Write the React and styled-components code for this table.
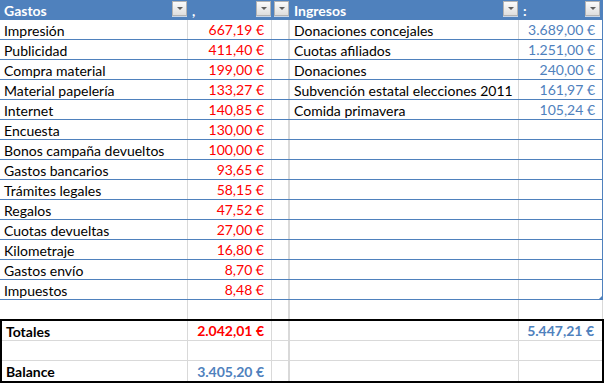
import React from "react";
import styled, { createGlobalStyle, css } from "styled-components";

const GlobalStyle = createGlobalStyle`
  html, body { margin: 0; padding: 0; background: #ffffff; }
  body { font-family: Lato, "Open Sans", sans-serif; font-size: 14px; color: #000; }
`;

const BLUE = "#4f81bd";
const GRID = "#d9d9d9";

const Sheet = styled.div`
  width: 604px;
  height: 383px;
  overflow: hidden;
  display: flex;
  flex-direction: column;
`;

const Row = styled.div`
  display: grid;
  grid-template-columns: ${(p) => (p.$boxed ? "186px 84px 18px 229px 83px" : "188px 84px 18px 229px 84px")};
  height: ${(p) => p.$h || 20}px;
  box-sizing: border-box;
  ${(p) =>
    p.$variant === "header" &&
    css`
      background: ${BLUE};
      color: #fff;
      font-weight: 700;
      width: 603px;
    `}
  ${(p) =>
    p.$variant === "data" &&
    css`
      border-bottom: 1px solid ${BLUE};
      width: 603px;
    `}
  ${(p) =>
    p.$variant === "grid" &&
    css`
      border-bottom: 1px solid ${GRID};
    `}
  ${(p) =>
    p.$variant === "last" &&
    css`
      border-bottom: none;
    `}
`;

const Cell = styled.div`
  position: relative;
  display: flex;
  align-items: center;
  justify-content: ${(p) => (p.$right ? "flex-end" : "flex-start")};
  padding: ${(p) => (p.$right ? "0 7px 0 0" : "1px 0 0 4px")};
  box-sizing: border-box;
  white-space: nowrap;
  overflow: visible;
  color: ${(p) => p.$color || "inherit"};
  font-weight: ${(p) => (p.$bold ? 700 : "inherit")};
  border-right: ${(p) => (p.$wide ? 2 : 1)}px solid ${(p) => p.$edge || GRID};
`;

const HeadCell = styled.div`
  position: relative;
  display: flex;
  align-items: center;
  padding-left: 4px;
  box-sizing: border-box;
  white-space: nowrap;
`;

const FilterButton = styled.span`
  position: absolute;
  right: ${(p) => p.$right ?? 1}px;
  top: 1px;
  width: 15px;
  height: 15px;
  box-sizing: border-box;
  border: 1px solid #b3b3b3;
  background: linear-gradient(#fbfbfb, #dedede);
  box-shadow: 0 1px 0 #c8d6e8;
  &::after {
    content: "";
    position: absolute;
    left: 4px;
    top: 5px;
    border-left: 3px solid transparent;
    border-right: 3px solid transparent;
    border-top: 3px solid #5f5f5f;
  }
`;

const ResizeHandle = styled.span`
  position: absolute;
  right: -1px;
  bottom: 0;
  width: 0;
  height: 0;
  border-left: 4px solid transparent;
  border-bottom: 4px solid ${BLUE};
`;

const TotalsBox = styled.div`
  border: 2px solid #000;
  width: 604px;
  box-sizing: border-box;
`;

const gastos = [
  ["Impresión", "667,19 €"],
  ["Publicidad", "411,40 €"],
  ["Compra material", "199,00 €"],
  ["Material papelería", "133,27 €"],
  ["Internet", "140,85 €"],
  ["Encuesta", "130,00 €"],
  ["Bonos campaña devueltos", "100,00 €"],
  ["Gastos bancarios", "93,65 €"],
  ["Trámites legales", "58,15 €"],
  ["Regalos", "47,52 €"],
  ["Cuotas devueltas", "27,00 €"],
  ["Kilometraje", "16,80 €"],
  ["Gastos envío", "8,70 €"],
  ["Impuestos", "8,48 €"],
];

const ingresos = [
  ["Donaciones concejales", "3.689,00 €"],
  ["Cuotas afiliados", "1.251,00 €"],
  ["Donaciones", "240,00 €"],
  ["Subvención estatal elecciones 2011", "161,97 €"],
  ["Comida primavera", "105,24 €"],
];

const RED = "#ff0000";

export default function App() {
  return (
    <>
      <GlobalStyle />
      <Sheet>
        <Row $variant="header">
          <HeadCell>
            Gastos
            <FilterButton />
          </HeadCell>
          <HeadCell>
            ,
            <FilterButton />
          </HeadCell>
          <HeadCell>
            <FilterButton $right={1} />
          </HeadCell>
          <HeadCell>
            Ingresos
            <FilterButton />
          </HeadCell>
          <HeadCell>
            :
            <FilterButton $right={3} />
          </HeadCell>
        </Row>
        {gastos.map(([name, amount], i) => {
          const inc = ingresos[i];
          const last = i === gastos.length - 1;
          return (
            <Row key={name} $variant="data">
              <Cell>{name}</Cell>
              <Cell $right $color={RED}>{amount}</Cell>
              <Cell $wide />
              <Cell>{inc ? inc[0] : ""}</Cell>
              <Cell $right $color={BLUE} $edge={BLUE}>
                {inc ? inc[1] : ""}
                {last && <ResizeHandle />}
              </Cell>
            </Row>
          );
        })}
        <Row $variant="last" $h={19}>
          <Cell />
          <Cell />
          <Cell $wide />
          <Cell />
          <Cell />
        </Row>
        <TotalsBox>
          <Row $boxed $variant="grid">
            <Cell $bold>Totales</Cell>
            <Cell $right $bold $color={RED}>2.042,01 €</Cell>
            <Cell $wide />
            <Cell />
            <Cell $right $bold $color={BLUE} $edge="transparent">5.447,21 €</Cell>
          </Row>
          <Row $boxed $variant="grid">
            <Cell />
            <Cell />
            <Cell $wide />
            <Cell />
            <Cell $edge="transparent" />
          </Row>
          <Row $boxed $variant="last">
            <Cell $bold>Balance</Cell>
            <Cell $right $bold $color={BLUE}>3.405,20 €</Cell>
            <Cell $wide />
            <Cell />
            <Cell $edge="transparent" />
          </Row>
        </TotalsBox>
      </Sheet>
    </>
  );
}
